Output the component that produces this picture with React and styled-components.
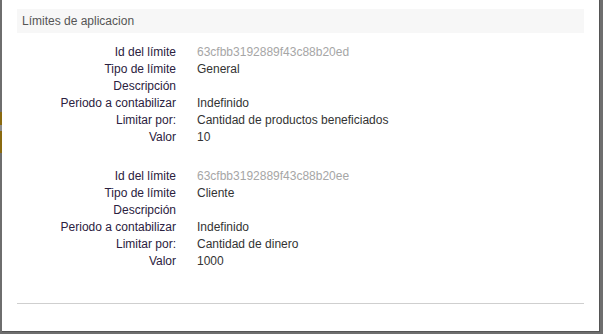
import React from 'react';
import styled, { createGlobalStyle } from 'styled-components';

const GlobalStyle = createGlobalStyle`
  html, body {
    margin: 0;
    padding: 0;
    background: #6e6e6e;
  }
  body {
    font-family: "Liberation Sans", Arial, sans-serif;
  }
`;

const Page = styled.div`
  display: flex;
  width: 603px;
  height: 334px;
  overflow: hidden;
  background: #6e6e6e;
`;

const Backdrop = styled.div`
  width: 2px;
  flex: none;
  display: flex;
  flex-direction: column;
  padding-top: 112px;
`;

const BackdropBit = styled.div`
  height: ${(p) => p.h}px;
  background: ${(p) => p.color};
`;

const Modal = styled.div`
  width: 598px;
  height: 332px;
  flex: none;
  background: #fff;
  border-right: 1px solid #555;
  border-bottom: 1px solid #555;
  padding: 9px 15px 27px 15px;
  box-sizing: border-box;
  display: flex;
  flex-direction: column;
`;

const Header = styled.div`
  background: #f7f7f7;
  height: 24px;
  padding-left: 5px;
  font-size: 12px;
  line-height: 24px;
  color: #555;
`;

const Blocks = styled.div`
  padding-top: 11px;
  display: flex;
  flex-direction: column;
  gap: 22px;
`;

const Grid = styled.div`
  display: grid;
  grid-template-columns: 159px 1fr;
  column-gap: 21px;
  font-size: 12px;
  line-height: 17px;
  color: #333;
`;

const Label = styled.div`
  text-align: right;
  color: #2b2140;
`;

const Value = styled.div`
  color: ${(p) => (p.muted ? '#a6a6a6' : '#333')};
  min-height: 17px;
`;

const Divider = styled.div`
  margin-top: auto;
  height: 1px;
  background: #cfcfcf;
`;

const limits = [
  {
    id: '63cfbb3192889f43c88b20ed',
    tipo: 'General',
    descripcion: '',
    periodo: 'Indefinido',
    limitar: 'Cantidad de productos beneficiados',
    valor: '10',
  },
  {
    id: '63cfbb3192889f43c88b20ee',
    tipo: 'Cliente',
    descripcion: '',
    periodo: 'Indefinido',
    limitar: 'Cantidad de dinero',
    valor: '1000',
  },
];

function LimitBlock({ limit }) {
  return (
    <Grid>
      <Label>Id del límite</Label>
      <Value muted>{limit.id}</Value>
      <Label>Tipo de límite</Label>
      <Value>{limit.tipo}</Value>
      <Label>Descripción</Label>
      <Value>{limit.descripcion}</Value>
      <Label>Periodo a contabilizar</Label>
      <Value>{limit.periodo}</Value>
      <Label>Limitar por:</Label>
      <Value>{limit.limitar}</Value>
      <Label>Valor</Label>
      <Value>{limit.valor}</Value>
    </Grid>
  );
}

export default function App() {
  return (
    <Page>
      <GlobalStyle />
      <Backdrop>
        <BackdropBit h={13} color="#8a6a10" />
        <BackdropBit h={6} color="#8c8c8c" />
        <BackdropBit h={22} color="#8a6a10" />
      </Backdrop>
      <Modal>
        <Header>Límites de aplicacion</Header>
        <Blocks>
          {limits.map((l) => (
            <LimitBlock key={l.id} limit={l} />
          ))}
        </Blocks>
        <Divider />
      </Modal>
    </Page>
  );
}
